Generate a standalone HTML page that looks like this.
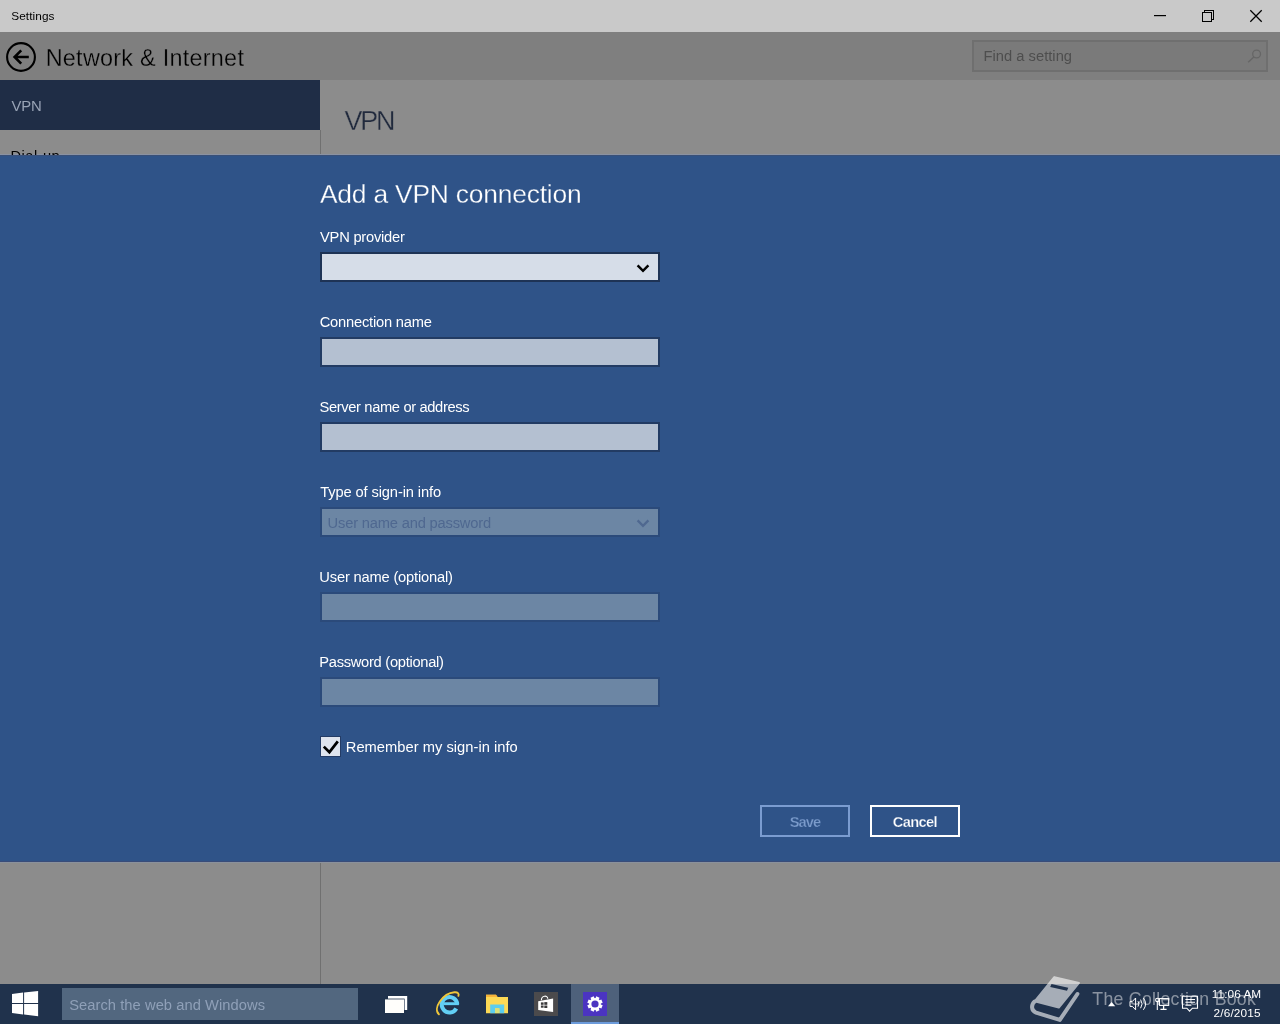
<!DOCTYPE html>
<html><head><meta charset="utf-8"><title>Settings</title>
<style>
*{margin:0;padding:0;box-sizing:border-box;}
html,body{width:1280px;height:1024px;overflow:hidden;background:#8c8c8c;font-family:"Liberation Sans",sans-serif;}
body{position:relative;}
.abs{position:absolute;}
.t{position:absolute;white-space:nowrap;will-change:transform;font-family:"Liberation Sans",sans-serif;}
#titlebar{left:0;top:0;width:1280px;height:32px;background:#c9c9c9;}
#header{left:0;top:32px;width:1280px;height:48px;background:#7f7f7f;}
#content{left:0;top:80px;width:1280px;height:904px;background:#8c8c8c;}
#sidesel{left:0;top:80px;width:320px;height:50px;background:#1f2d46;}
#sideline{left:320px;top:130px;width:1px;height:854px;background:#707070;}
#findbox{left:972px;top:40px;width:296px;height:32px;background:#7a7a7a;border:2px solid #6f6f6f;}
#dialog{left:0;top:155px;width:1280px;height:707px;background:#2f5388;}
.inp{position:absolute;left:320px;width:340px;height:30px;border:2px solid #223b63;background:#b4c0d1;}
#dd1{top:252px;background:#d6dde8;border-color:#1e3355;}
#in2{top:337px;}
#in3{top:422px;}
#dd4{top:507px;background:#6c86a4;border-color:#2b4a7a;}
#in5{top:592px;background:#6c86a4;border-color:#2b4a7a;}
#in6{top:677px;background:#6c86a4;border-color:#2b4a7a;}
#chk{left:320px;top:736px;width:21px;height:21px;background:#dfe4ee;border:1px solid #243c66;}
.btn{position:absolute;top:805px;width:90px;height:32px;border:2px solid #fff;}
#bsave{left:760px;border-color:#7b9cd0;}
#bcancel{left:870px;}
#taskbar{left:0;top:984px;width:1280px;height:40px;background:#20324c;}
#tsearch{left:62px;top:988px;width:296px;height:32px;background:#52677f;}
#tactive{left:571px;top:984px;width:48px;height:40px;background:#4e617b;}
#tactiveline{left:571px;top:1022px;width:48px;height:2px;background:#6c9bdb;}
svg{position:absolute;overflow:visible;}
#dlgtop0{left:0;top:154px;width:1280px;height:1px;background:#8a92a3;}
#dlgtop{left:0;top:155px;width:1280px;height:1px;background:#3a5077;}
#dlgbot{left:0;top:861px;width:1280px;height:1px;background:#3a4c78;}
#dlgbot0{left:0;top:862px;width:1280px;height:1px;background:#8a919c;}

</style></head>
<body>
<div class="abs" id="titlebar"></div>
<div class="abs" id="header"></div>
<div class="abs" id="content"></div>
<div class="abs" id="sidesel"></div>
<div class="abs" id="sideline"></div>
<div class="abs" id="findbox"></div>
<div class="abs" id="dlgtop0"></div>
<span class="t" id="t_dial" style="left:10px;top:149px;padding-left:0.59px;font-size:14.7px;line-height:14.7px;font-weight:400;color:#000000;letter-spacing:0.425px;">Dial-up</span>
<div class="abs" id="dialog"></div>
<div class="abs" id="dlgtop"></div>
<div class="abs" id="dlgbot"></div>
<div class="abs" id="dlgbot0"></div>
<div class="inp" id="dd1"></div>
<div class="inp" id="in2"></div>
<div class="inp" id="in3"></div>
<div class="inp" id="dd4"></div>
<div class="inp" id="in5"></div>
<div class="inp" id="in6"></div>
<div class="abs" id="chk"></div>
<div class="btn" id="bsave"></div>
<div class="btn" id="bcancel"></div>
<div class="abs" id="taskbar"></div>
<div class="abs" id="tsearch"></div>
<div class="abs" id="tactive"></div>
<div class="abs" id="tactiveline"></div>
<!-- window controls -->
<svg id="winctl" style="left:1140px;top:0" width="140" height="32" viewBox="1140 0 140 32">
  <rect x="1154" y="15" width="12" height="1.2" fill="#000"/>
  <rect x="1204.5" y="10.5" width="9" height="9" fill="none" stroke="#000" stroke-width="1"/>
  <rect x="1202.5" y="12.5" width="9" height="9" fill="#c9c9c9" stroke="#000" stroke-width="1"/>
  <path d="M1250.3 10.3 L1261.7 21.7 M1261.7 10.3 L1250.3 21.7" stroke="#000" stroke-width="1.25" fill="none"/>
</svg>
<!-- back button -->
<svg id="backbtn" style="left:0;top:36px" width="44" height="42" viewBox="0 36 44 42">
  <circle cx="21" cy="57" r="13.9" fill="none" stroke="#000" stroke-width="2.1"/>
  <path d="M28.8 57 H15.2 M21.2 50.4 L14.6 57 L21.2 63.6" fill="none" stroke="#000" stroke-width="2.6" stroke-linejoin="miter"/>
</svg>
<!-- magnifier -->
<svg id="mag" style="left:1244px;top:46px" width="20" height="20" viewBox="1244 46 20 20">
  <circle cx="1256.6" cy="54" r="3.9" fill="none" stroke="#666" stroke-width="1.3"/>
  <path d="M1253.8 57 L1248.2 62.2" stroke="#666" stroke-width="1.4" fill="none"/>
</svg>
<!-- chevrons -->
<svg id="chev1" style="left:634px;top:262px" width="18" height="14" viewBox="634 262 18 14">
  <path d="M637.6 265.4 L643 270.8 L648.4 265.4" fill="none" stroke="#000" stroke-width="2.5"/>
</svg>
<svg id="chev4" style="left:634px;top:517px" width="18" height="14" viewBox="634 517 18 14">
  <path d="M637.6 520.4 L643 525.8 L648.4 520.4" fill="none" stroke="#4f6890" stroke-width="2.3"/>
</svg>
<!-- checkmark -->
<svg id="chkmark" style="left:320px;top:736px" width="21" height="21" viewBox="320 736 21 21">
  <path d="M323.8 746.6 L329.4 752.2 L337.8 741.4" fill="none" stroke="#000" stroke-width="2.7"/>
</svg>
<!-- taskbar icons -->
<svg id="tbicons" style="left:0;top:984px" width="1280" height="40" viewBox="0 984 1280 40">
  <!-- start logo -->
  <g fill="#fff">
    <path d="M12 994.1 L23.1 992.6 V1003 H12 Z"/>
    <path d="M24.1 992.4 L38.1 990.9 V1003 H24.1 Z"/>
    <path d="M12 1004 H23.1 V1014.4 L12 1013 Z"/>
    <path d="M24.1 1004 H38.1 V1016.2 L24.1 1014.6 Z"/>
  </g>
  <!-- task view -->
  <rect x="388" y="996" width="19.2" height="14" fill="#fff"/>
  <rect x="384.6" y="998.6" width="20" height="14.8" fill="#20324c"/>
  <rect x="385" y="999.4" width="19" height="13.6" fill="#fffefb"/>
  <!-- IE -->
  <g fill="none">
    <path d="M456.3 1008.5 A7.75 7.7 0 1 1 457.25 1004.4" stroke="#62cff5" stroke-width="4"/>
    <path d="M443.6 1003.7 H458.9" stroke="#62cff5" stroke-width="2.9"/>
    <path d="M438.9 1014.3 C432.6 1008.6 442.6 993.4 454.4 992.3 C457.8 992 459.3 993.6 458.4 995.8" stroke="#efc63a" stroke-width="1.9" stroke-linecap="round"/>
  </g>
  <!-- folder -->
  <path d="M486 994.8 H496 L497.6 997 H508 V1013.2 H486 Z" fill="#fcd955"/>
  <path d="M486 994.8 H496 L497.6 997 H486 Z" fill="#f6b33a"/>
  <path d="M490.2 1004.6 H504.2 V1013.2 H499.4 V1008.2 H495 V1013.2 H490.2 Z" fill="#5ccdee"/>
  <rect x="495" y="1008.2" width="4.4" height="5" fill="#d9e07a"/>
  <!-- store -->
  <rect x="534" y="992" width="24" height="24" fill="#4b4a4c"/>
  <path d="M538.2 1001.2 L553.1 998.4 V1012 L538.2 1009.9 Z" fill="#fff"/>
  <path d="M541.4 1000.2 C541.4 995.4 547.6 994.8 547.8 998.8" fill="none" stroke="#fff" stroke-width="1.1"/>
  <g fill="#3a393b">
    <rect x="540.9" y="1002.4" width="2.7" height="2.4"/>
    <rect x="544.3" y="1002.1" width="3" height="2.7"/>
    <rect x="540.9" y="1005.5" width="2.7" height="2.2"/>
    <rect x="544.3" y="1005.5" width="3" height="2.5"/>
  </g>
  <!-- settings -->
  <rect x="583" y="992" width="24" height="24" fill="#4b34c1"/>
  <g transform="translate(595 1004)">
    <g fill="#fff">
      <rect x="-1.75" y="-7.6" width="3.5" height="15.2" transform="rotate(22.5)"/>
      <rect x="-1.75" y="-7.6" width="3.5" height="15.2" transform="rotate(67.5)"/>
      <rect x="-1.75" y="-7.6" width="3.5" height="15.2" transform="rotate(112.5)"/>
      <rect x="-1.75" y="-7.6" width="3.5" height="15.2" transform="rotate(157.5)"/>
      <circle r="5.9"/>
    </g>
    <circle r="3.6" fill="#4b34c1"/>
  </g>
  <!-- tray: chevron -->
  <path d="M1108 1006.2 L1111.6 1002 L1115.2 1006.2 Z" fill="#fff"/>
  <!-- volume -->
  <g fill="none" stroke="#fff" stroke-width="1">
    <path d="M1130 1001.4 H1132.4 L1135.6 998 V1009.8 L1132.4 1006.4 H1130 Z"/>
    <path d="M1138 1001.2 Q1139.8 1003.9 1138 1006.6"/>
    <path d="M1140.6 999.6 Q1143.6 1003.9 1140.6 1008.2"/>
    <path d="M1143.4 998 Q1147.8 1003.9 1143.4 1009.8"/>
  </g>
  <!-- network -->
  <g fill="none" stroke="#fff" stroke-width="1.1">
    <rect x="1159.5" y="998.6" width="9.2" height="6.8"/>
    <path d="M1163.6 1005.4 V1009 M1160.4 1009.4 H1166.6" stroke-width="1.3"/>
    <path d="M1157.3 1001.8 V1010"/>
    <circle cx="1157.3" cy="999.9" r="1.7" fill="#20324c"/>
  </g>
  <!-- notifications -->
  <g fill="none" stroke="#fff" stroke-width="1.1">
    <path d="M1182.5 996.3 H1197.5 V1008.2 H1192.4 L1189.6 1011.2 L1186.8 1008.2 H1182.5 Z"/>
    <path d="M1185.4 999.5 H1195 M1185.4 1002.3 H1195 M1185.4 1005.1 H1191.4"/>
  </g>
</svg>
<!-- watermark book -->
<svg id="wmbook" style="left:1024px;top:972px" width="64" height="52" viewBox="1024 972 64 52">
  <defs><mask id="bkm" maskUnits="userSpaceOnUse" x="1024" y="972" width="64" height="52">
    <rect x="1024" y="972" width="64" height="52" fill="#fff"/>
    <path d="M1051.5 984.1 L1068.3 987.7 L1067 990.7 L1050.2 987.1 Z" fill="#000"/>
  </mask></defs>
  <g opacity="0.6" mask="url(#bkm)">
    <path fill="#fff" stroke="#fff" stroke-width="2" stroke-linejoin="round"
      d="M1054.3 977.1 L1079 982.9 L1058.8 1007.6 L1034.6 1001.4 Z"/>
    <path fill="none" stroke="#fff" stroke-width="4" stroke-linecap="round" stroke-linejoin="round"
      d="M1034.6 1001.6 C1031.2 1004.6 1030.8 1010.6 1036 1012.6 L1059.8 1019.9 L1077.4 994"/>
  </g>
</svg>

<span class="t" id="t_settings" style="left:11px;top:11px;padding-left:0.27px;font-size:11.8px;line-height:11.8px;font-weight:400;color:#000000;letter-spacing:0.080px;">Settings</span>
<span class="t" id="t_net" style="left:45px;top:47px;padding-left:0.70px;font-size:23.4px;line-height:23.4px;font-weight:400;color:#000000;letter-spacing:0.265px;-webkit-text-stroke:0.3px #7f7f7f;">Network &amp; Internet</span>
<span class="t" id="t_find" style="left:983px;top:49px;padding-left:0.49px;font-size:14.7px;line-height:14.7px;font-weight:400;color:#4e4e4e;letter-spacing:0.026px;">Find a setting</span>
<span class="t" id="t_svpn" style="left:11px;top:99px;padding-left:0.52px;font-size:14.9px;line-height:14.9px;font-weight:400;color:#98a3b5;letter-spacing:-0.213px;">VPN</span>
<span class="t" id="t_mvpn" style="left:344px;top:108px;padding-left:0.54px;font-size:26.9px;line-height:26.9px;font-weight:400;color:#212a3d;letter-spacing:-2.227px;-webkit-text-stroke:0.35px #8c8c8c;">VPN</span>
<span class="t" id="t_add" style="left:319px;top:181px;padding-left:0.92px;font-size:26.4px;line-height:26.4px;font-weight:400;color:#ffffff;letter-spacing:-0.198px;-webkit-text-stroke:0.3px #2f5388;">Add a VPN connection</span>
<span class="t" id="t_l1" style="left:320px;top:230px;padding-left:0.02px;font-size:14.7px;line-height:14.7px;font-weight:400;color:#ffffff;letter-spacing:-0.230px;">VPN provider</span>
<span class="t" id="t_l2" style="left:319px;top:315px;padding-left:0.63px;font-size:14.7px;line-height:14.7px;font-weight:400;color:#ffffff;letter-spacing:-0.205px;">Connection name</span>
<span class="t" id="t_l3" style="left:319px;top:400px;padding-left:0.53px;font-size:14.7px;line-height:14.7px;font-weight:400;color:#ffffff;letter-spacing:-0.356px;">Server name or address</span>
<span class="t" id="t_l4" style="left:320px;top:485px;padding-left:0.15px;font-size:14.7px;line-height:14.7px;font-weight:400;color:#ffffff;letter-spacing:-0.121px;">Type of sign-in info</span>
<span class="t" id="t_l5" style="left:319px;top:570px;padding-left:0.37px;font-size:14.7px;line-height:14.7px;font-weight:400;color:#ffffff;letter-spacing:-0.189px;">User name (optional)</span>
<span class="t" id="t_l6" style="left:319px;top:655px;padding-left:0.29px;font-size:14.7px;line-height:14.7px;font-weight:400;color:#ffffff;letter-spacing:-0.286px;">Password (optional)</span>
<span class="t" id="t_unp" style="left:327px;top:516px;padding-left:0.57px;font-size:14.7px;line-height:14.7px;font-weight:400;color:#4f6890;letter-spacing:-0.182px;">User name and password</span>
<span class="t" id="t_rem" style="left:345px;top:740px;padding-left:0.79px;font-size:14.7px;line-height:14.7px;font-weight:400;color:#ffffff;letter-spacing:0.023px;">Remember my sign-in info</span>
<span class="t" id="t_save" style="left:789px;top:815px;padding-left:0.64px;font-size:14.7px;line-height:14.7px;font-weight:700;color:#7b9bcb;letter-spacing:-0.895px;-webkit-text-stroke:0.25px #2f5388;">Save</span>
<span class="t" id="t_cancel" style="left:892px;top:815px;padding-left:0.75px;font-size:14.7px;line-height:14.7px;font-weight:700;color:#ffffff;letter-spacing:-0.674px;-webkit-text-stroke:0.25px #2f5388;">Cancel</span>
<span class="t" id="t_search" style="left:69px;top:998px;padding-left:0.13px;font-size:14.7px;line-height:14.7px;font-weight:400;color:#8fa0b8;letter-spacing:0.066px;">Search the web and Windows</span>
<span class="t" id="t_wm" style="left:1092px;top:991px;padding-left:0.29px;font-size:17.7px;line-height:17.7px;font-weight:400;color:rgba(255,255,255,0.47);letter-spacing:0.293px;">The Collection Book</span>
<span class="t" id="t_time" style="left:1211px;top:989px;padding-left:0.84px;font-size:11.8px;line-height:11.8px;font-weight:400;color:#ffffff;letter-spacing:0.058px;">11:06 AM</span>
<span class="t" id="t_date" style="left:1213px;top:1008px;padding-left:0.44px;font-size:11.8px;line-height:11.8px;font-weight:400;color:#ffffff;letter-spacing:0.185px;">2/6/2015</span>
</body></html>
